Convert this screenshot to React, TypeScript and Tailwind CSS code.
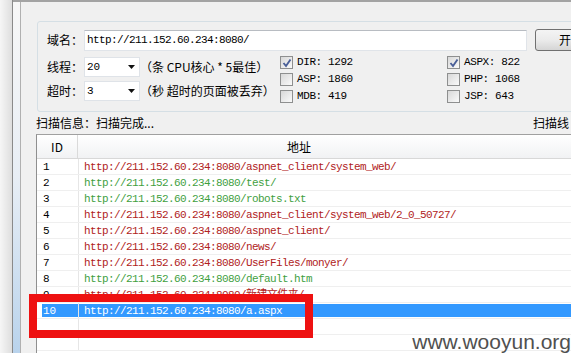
import React from "react";

const cjk = "font-['Noto_Sans_CJK_SC',sans-serif]";
const mono = "font-['Liberation_Mono','Noto_Sans_CJK_SC',monospace]";

function Check({ checked }: { checked?: boolean }) {
  return (
    <span className="w-[13px] h-[13px] shrink-0 border border-[#8e8f8f] bg-gradient-to-br from-[#d8d8d8] to-[#fafafa] flex items-center justify-center">
      {checked && (
        <svg width="10" height="10" viewBox="0 0 10 10">
          <path d="M1.5 5 L4 8 L8.5 1.5" stroke="#4a5f98" strokeWidth="1.9" fill="none" />
        </svg>
      )}
    </span>
  );
}

function Sel({ value }: { value: string }) {
  return (
    <div className="w-[56px] h-full bg-white border border-[#dfe3e8] flex items-center justify-between pl-[2px] pr-[4px]">
      <span className={`${mono} text-[11px] leading-none text-black`}>{value}</span>
      <svg width="7" height="4" viewBox="0 0 7 4">
        <path d="M0 0H7L3.5 4Z" fill="#111" />
      </svg>
    </div>
  );
}

const base = "http://211.152.60.234:8080/";
const rows: { id: string; path: string; color: string }[] = [
  { id: "1", path: "aspnet_client/system_web/", color: "text-[#b02222]" },
  { id: "2", path: "test/", color: "text-[#3f9f3f]" },
  { id: "3", path: "robots.txt", color: "text-[#3f9f3f]" },
  { id: "4", path: "aspnet_client/system_web/2_0_50727/", color: "text-[#b02222]" },
  { id: "5", path: "aspnet_client/", color: "text-[#b02222]" },
  { id: "6", path: "news/", color: "text-[#b02222]" },
  { id: "7", path: "UserFiles/monyer/", color: "text-[#b02222]" },
  { id: "8", path: "default.htm", color: "text-[#3f9f3f]" },
  { id: "9", path: "新建文件夹/", color: "text-[#b02222]" },
];

function CheckItem({ checked, label }: { checked?: boolean; label: string }) {
  return (
    <div className="h-[17px] flex items-center">
      <Check checked={checked} />
      <span className={`${mono} text-[11px] tracking-[-0.4px] leading-none ml-[4px] text-black`}>{label}</span>
    </div>
  );
}

export default function App() {
  return (
    <div className={`relative w-[571px] h-[353px] overflow-hidden flex bg-[#f0f0f0] ${cjk} text-black`}>
      <div className="w-[12px] shrink-0 bg-gradient-to-r from-[#f6f6f6] to-[#dedede]" />
      <div className="w-px shrink-0 bg-[#8a8a8a]" />
      <div className="flex-1 min-w-0 flex flex-col border-t-2 border-[#a3a3a3]">
        <div className="flex flex-1 min-h-0">
          <div className="w-[7px] shrink-0 bg-gradient-to-b from-[#f7f7f7] via-[#e8eef5] to-[#b9d3ec]" />
          <div className="w-px shrink-0 bg-[#b0b0b0]" />
          <div className="flex-1 min-w-0 flex flex-col pt-[19px] overflow-hidden">
            {/* group box */}
            <div className="ml-[16px] w-[620px] h-[91px] shrink-0 border border-[#d5dfe5] rounded-[3px] pt-[7px] pl-[9px] flex flex-col">
              <div className="h-[22px] flex items-center">
                <span className="w-[37px] text-[12px] leading-none">域名：</span>
                <div className="w-[443px] h-[21px] bg-white border border-[#e0e4e9] border-t-[#b8bcc2] flex items-center pl-[2px]">
                  <span className={`${mono} text-[11px] tracking-[-0.6px] leading-none`}>http://211.152.60.234:8080/</span>
                </div>
                <div className="ml-[8px] w-[75px] h-[22px] rounded-[3px] border border-[#707070] bg-gradient-to-b from-[#f4f4f4] via-[#ebebeb] to-[#d5d5d5] flex items-center pl-[23px]">
                  <span className="text-[12px] leading-none">开</span>
                </div>
              </div>
              <div className="mt-[4px] flex">
                <div className="w-[233px] shrink-0 flex flex-col gap-[4px] mt-[2px]">
                  <div className="h-[20px] flex items-center">
                    <span className="w-[37px] text-[12px] leading-none">线程：</span>
                    <Sel value="20" />
                    <span className="text-[12px] leading-none whitespace-pre">（条 CPU核心 * 5最佳）</span>
                  </div>
                  <div className="h-[20px] flex items-center">
                    <span className="w-[37px] text-[12px] leading-none">超时：</span>
                    <Sel value="3" />
                    <span className="text-[12px] leading-none whitespace-pre">（秒 超时的页面被丢弃）</span>
                  </div>
                </div>
                <div className="w-[167px] shrink-0 flex flex-col -mt-[1px]">
                  <CheckItem checked label="DIR: 1292" />
                  <CheckItem label="ASP: 1860" />
                  <CheckItem label="MDB: 419" />
                </div>
                <div className="flex flex-col -mt-[1px]">
                  <CheckItem checked label="ASPX: 822" />
                  <CheckItem label="PHP: 1068" />
                  <CheckItem label="JSP: 643" />
                </div>
              </div>
            </div>
            {/* status */}
            <div className="h-[22px] shrink-0 flex items-center pl-[15px]">
              <span className="w-[497px] shrink-0 text-[12px] leading-none">扫描信息：扫描完成...</span>
              <span className="text-[12px] leading-none whitespace-nowrap">扫描线</span>
            </div>
            {/* list */}
            <div className="ml-[15px] w-[620px] flex-1 bg-white border-l border-t border-l-[#8f8f8f] border-t-[#a0a0a0] flex flex-col">
              <div className="h-[24px] shrink-0 flex border-b border-[#d8d8d8] bg-gradient-to-b from-white to-[#f1f2f4]">
                <div className="w-[41px] border-r border-[#dadada] flex items-center justify-center text-[12px] leading-none">ID</div>
                <div className="flex-1 flex items-center pl-[209px] text-[12px] leading-none">地址</div>
              </div>
              {rows.map((r) => (
                <div key={r.id} className="h-[16px] shrink-0 flex border-b border-[#efefef]">
                  <div className="w-[42px] border-r border-[#e6e6e6] flex items-center pl-[6px] pt-[1px]">
                    <span className={`${mono} text-[11px] leading-none`}>{r.id}</span>
                  </div>
                  <div className="flex-1 flex items-center pl-[5px] pt-[1px]">
                    <span className={`${mono} text-[11px] tracking-[-0.6px] leading-none whitespace-nowrap ${r.color}`}>{base + r.path}</span>
                  </div>
                </div>
              ))}
              <div className="h-[16px] shrink-0 flex border-b border-[#efefef]">
                <div className="w-[42px] border-r border-[#e6e6e6] flex pl-[5px] py-[1px]">
                  <div className="flex-1 bg-[#3399ff] flex items-center pl-[1px] pt-[1px]">
                    <span className={`${mono} text-[11px] leading-none text-white`}>10</span>
                  </div>
                </div>
                <div className="flex-1 flex py-[1px]">
                  <div className="flex-1 bg-[#3399ff] flex items-center pl-[5px] pt-[1px]">
                    <span className={`${mono} text-[11px] tracking-[-0.6px] leading-none whitespace-nowrap text-white`}>{base + "a.aspx"}</span>
                  </div>
                </div>
              </div>
              {[0, 1].map((i) => (
                <div key={i} className="h-[16px] shrink-0 flex border-b border-[#efefef]">
                  <div className="w-[42px] border-r border-[#e6e6e6]" />
                  <div className="flex-1" />
                </div>
              ))}
            </div>
          </div>
        </div>
      </div>

      {/* red highlight box */}
      <div className="absolute left-[29px] top-[294px] w-[284px] h-[44px] border-[8px] border-[#ee1111]" />

      {/* watermark */}
      <div className="absolute right-0 bottom-[1px] font-['Liberation_Sans',sans-serif] text-[21px] leading-none text-[#505050] [text-shadow:0_0_2px_#fff,0_0_1px_#fff]">
        www.wooyun.org
      </div>
    </div>
  );
}
